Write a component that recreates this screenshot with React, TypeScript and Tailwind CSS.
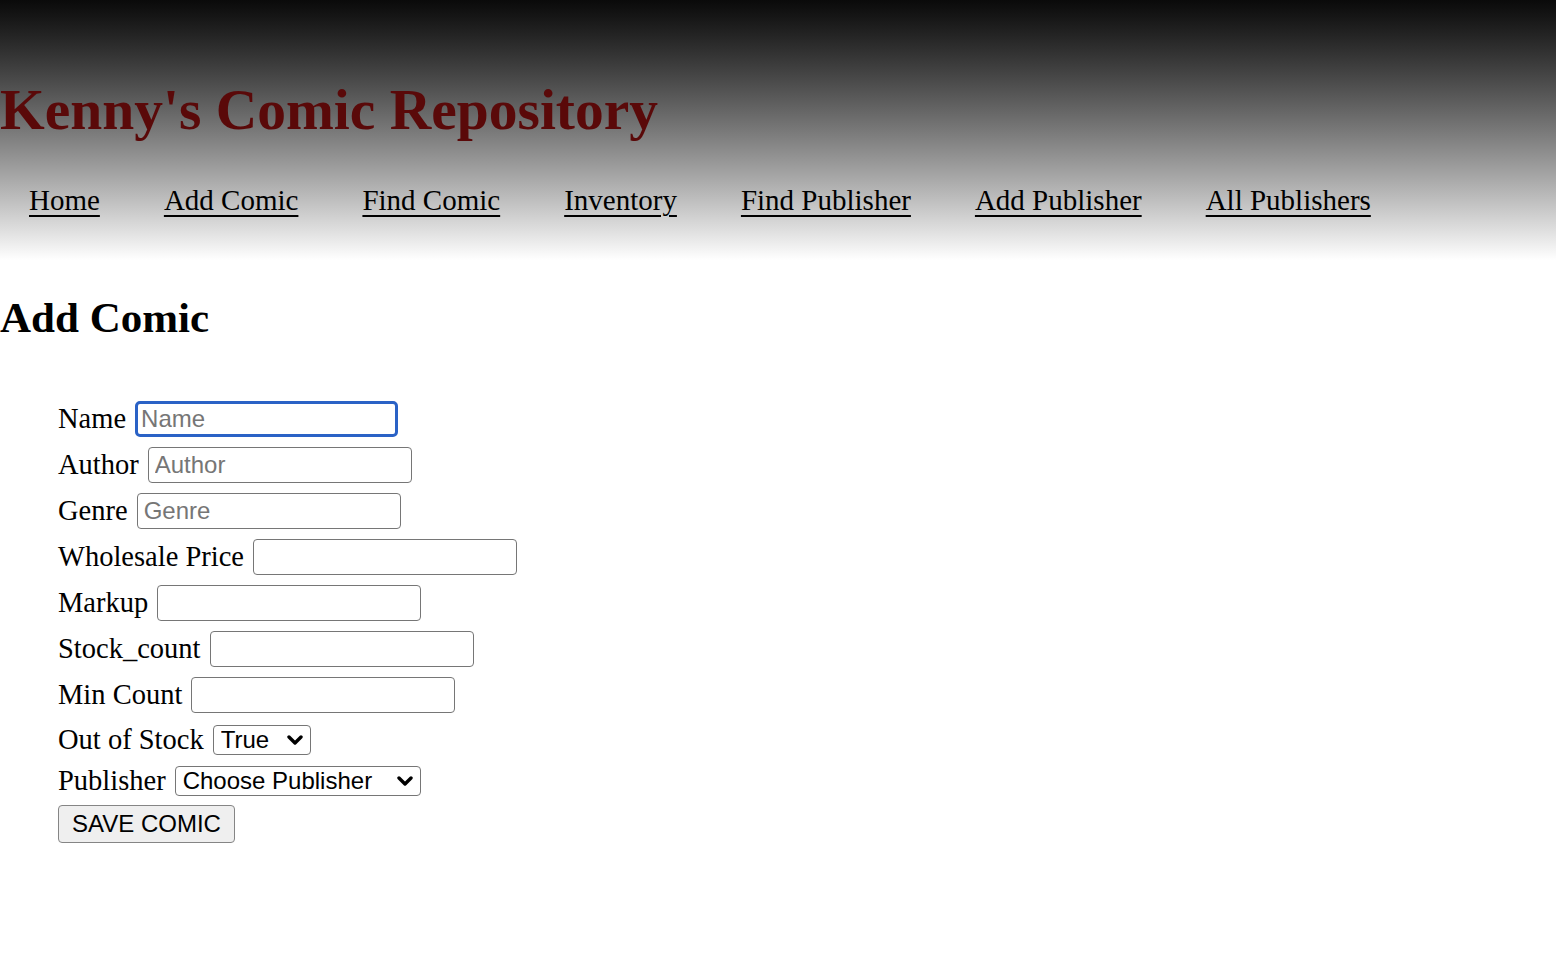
import { ReactNode } from 'react';

const links = ['Home', 'Add Comic', 'Find Comic', 'Inventory', 'Find Publisher', 'Add Publisher', 'All Publishers'];

const textFields = [
  { label: 'Name', placeholder: 'Name', focused: true },
  { label: 'Author', placeholder: 'Author' },
  { label: 'Genre', placeholder: 'Genre' },
  { label: 'Wholesale Price', placeholder: '' },
  { label: 'Markup', placeholder: '' },
  { label: 'Stock_count', placeholder: '' },
  { label: 'Min Count', placeholder: '' },
];

function Chevron() {
  return (
    <svg width="16" height="10" viewBox="0 0 16 10" className="pointer-events-none absolute right-[8px] top-1/2 -translate-y-1/2">
      <path d="M2 2 L8 8 L14 2" fill="none" stroke="#000" strokeWidth="3.4" strokeLinecap="round" strokeLinejoin="round" />
    </svg>
  );
}

function Row({ label, className = 'h-[46px]', children }: { label: string; className?: string; children: ReactNode }) {
  return (
    <div className={`flex items-center gap-[9px] ${className}`}>
      <label className="font-['Liberation_Serif',serif] text-[28.5px] leading-none text-black">{label}</label>
      {children}
    </div>
  );
}

export default function App() {
  return (
    <div className="min-h-[958px] w-full bg-white font-['Liberation_Serif',serif] text-black">
      <header className="h-[260px] bg-gradient-to-b from-[#0a0a0a] to-white">
        <h1 className="pt-[80px] text-[57.5px] font-bold leading-[60px] text-[#5a0909]">Kenny's Comic Repository</h1>
        <nav className="mt-[46px] flex gap-[64px] pl-[29px]">
          {links.map((l) => (
            <a key={l} href="#" className="text-[29px] leading-none text-black underline underline-offset-[5px] decoration-[2px]">
              {l}
            </a>
          ))}
        </nav>
      </header>

      <h2 className="mt-[36px] text-[43px] font-bold leading-none">Add Comic</h2>

      <form className="mt-[57px] pl-[58px] font-['Liberation_Sans',Arial,sans-serif]" onSubmit={(e) => e.preventDefault()}>
        {textFields.map((f) => (
          <Row key={f.label} label={f.label}>
            <input
              type="text"
              placeholder={f.placeholder}
              className={
                f.focused
                  ? 'h-[36px] w-[263px] rounded-[5px] border-[3px] border-[#2a62c6] bg-white px-[3px] text-[24px] text-black outline-none placeholder:text-[#767676]'
                  : 'h-[36px] w-[264px] rounded-[4px] border border-[#767676] bg-white px-[6px] text-[24px] text-black outline-none placeholder:text-[#767676]'
              }
            />
          </Row>
        ))}
        <Row label="Out of Stock" className="h-[44px]">
          <div className="relative">
            <select className="h-[30px] w-[98px] appearance-none rounded-[4px] border border-[#767676] bg-white pl-[7px] text-[24px] leading-none text-black outline-none">
              <option>True</option>
              <option>False</option>
            </select>
            <Chevron />
          </div>
        </Row>
        <Row label="Publisher" className="h-[38px]">
          <div className="relative">
            <select className="h-[30px] w-[246px] appearance-none rounded-[4px] border border-[#767676] bg-white pl-[7px] text-[24px] leading-none text-black outline-none">
              <option>Choose Publisher</option>
            </select>
            <Chevron />
          </div>
        </Row>
        <button
          type="submit"
          className="mt-[5px] h-[38px] w-[177px] rounded-[4px] border border-[#858585] bg-[#efefef] text-[24px] leading-none text-black"
        >
          SAVE COMIC
        </button>
      </form>
    </div>
  );
}
